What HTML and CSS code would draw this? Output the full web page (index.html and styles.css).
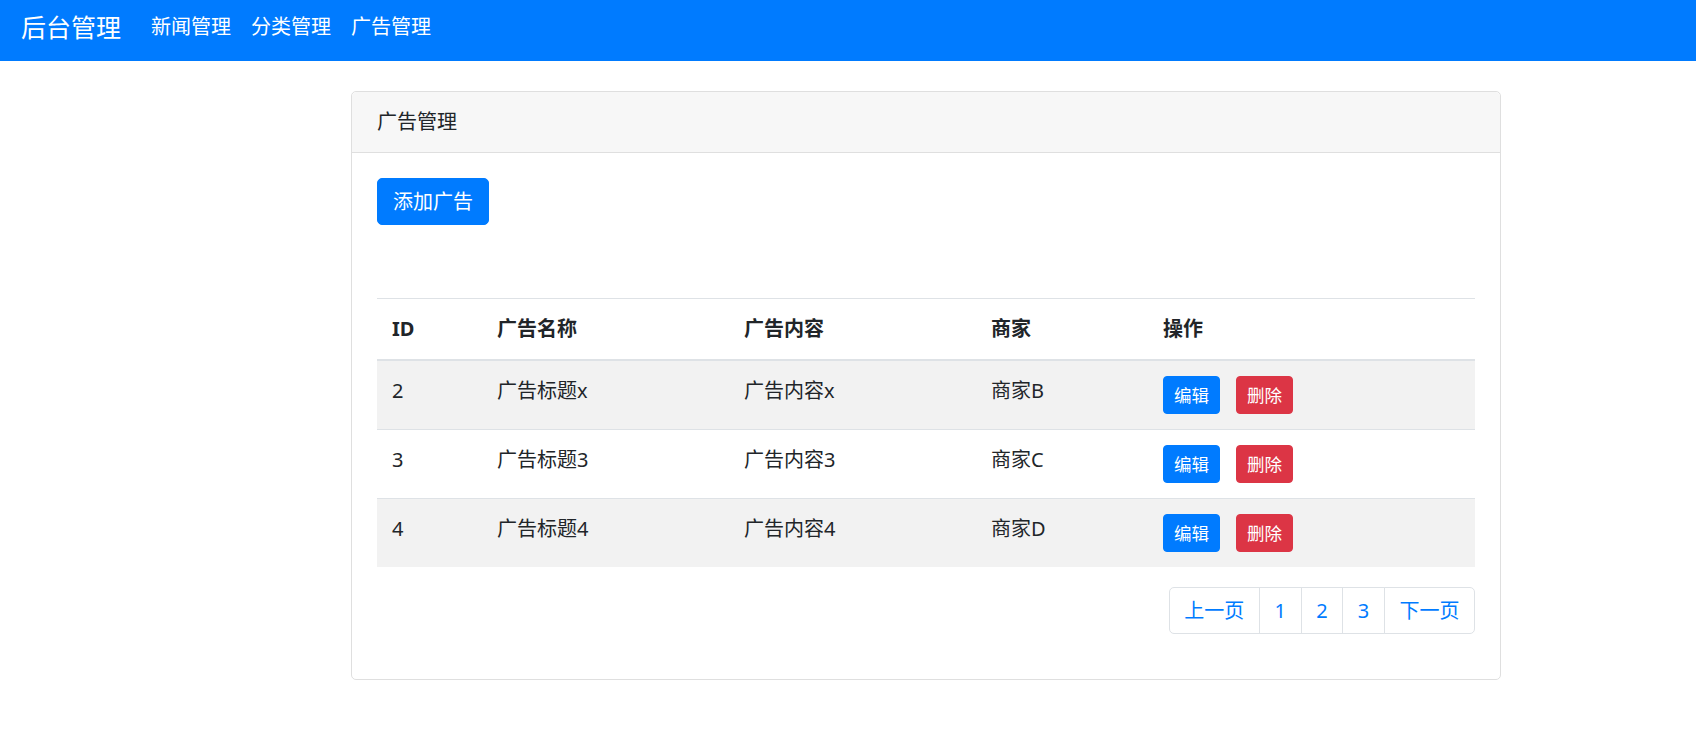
FILE: index.html
```html
<!DOCTYPE html>
<html lang="zh-CN">
<head>
<meta charset="utf-8">
<title>后台管理</title>
<link rel="stylesheet" href="styles.css">
</head>
<body>
<nav class="navbar">
  <a class="brand" href="#">后台管理</a>
  <ul class="nav">
    <li><a class="nav-link" href="#">新闻管理</a></li>
    <li><a class="nav-link" href="#">分类管理</a></li>
    <li><a class="nav-link" href="#">广告管理</a></li>
  </ul>
</nav>
<main class="main">
  <div class="card">
    <div class="card-header">广告管理</div>
    <div class="card-body">
      <a class="btn btn-primary btn-add" href="#">添加广告</a>
      <table class="table">
        <colgroup>
          <col class="c-id"><col class="c-name"><col class="c-content"><col class="c-shop"><col class="c-op">
        </colgroup>
        <thead>
          <tr><th>ID</th><th>广告名称</th><th>广告内容</th><th>商家</th><th>操作</th></tr>
        </thead>
        <tbody>
          <tr class="odd"><td>2</td><td>广告标题x</td><td>广告内容x</td><td>商家B</td><td><a class="btn btn-sm btn-primary" href="#">编辑</a><a class="btn btn-sm btn-danger" href="#">删除</a></td></tr>
          <tr><td>3</td><td>广告标题3</td><td>广告内容3</td><td>商家C</td><td><a class="btn btn-sm btn-primary" href="#">编辑</a><a class="btn btn-sm btn-danger" href="#">删除</a></td></tr>
          <tr class="odd"><td>4</td><td>广告标题4</td><td>广告内容4</td><td>商家D</td><td><a class="btn btn-sm btn-primary" href="#">编辑</a><a class="btn btn-sm btn-danger" href="#">删除</a></td></tr>
        </tbody>
      </table>
      <ul class="pagination">
        <li><a class="page-link first" href="#">上一页</a></li>
        <li><a class="page-link" href="#">1</a></li>
        <li><a class="page-link" href="#">2</a></li>
        <li><a class="page-link" href="#">3</a></li>
        <li><a class="page-link last" href="#">下一页</a></li>
      </ul>
    </div>
  </div>
</main>
</body>
</html>
```

FILE: styles.css
```css
* { box-sizing: border-box; }
html, body { margin: 0; padding: 0; }
body {
  font-family: "Noto Sans", "Noto Sans CJK SC", sans-serif;
  font-size: 20px;
  line-height: 1.5;
  color: #212529;
  background: #fff;
}
a { text-decoration: none; }

.navbar {
  display: flex;
  align-items: center;
  height: 61px;
  padding: 0 20px 7px 21px;
  background: #007bff;
}
.brand {
  color: #fff;
  font-size: 25px;
  line-height: 37px;
  margin-right: 20px;
}
.nav {
  display: flex;
  list-style: none;
  margin: 0;
  padding: 0;
}
.nav-link {
  display: block;
  color: #fff;
  padding: 0 10px;
  font-size: 20px;
  line-height: 30px;
}

.main {
  padding: 30px 0 0 351px;
}
.card {
  width: 1150px;
  border: 1px solid #dfdfdf;
  border-radius: 5px;
  background: #fff;
}
.card-header {
  padding: 15px 25px;
  background: #f7f7f7;
  border-bottom: 1px solid #dfdfdf;
  border-radius: 5px 5px 0 0;
  font-size: 20px;
  line-height: 30px;
}
.card-body {
  padding: 25px;
}

.btn {
  display: inline-block;
  border: 1px solid transparent;
  border-radius: 5px;
  color: #fff;
  vertical-align: middle;
}
.btn-primary { background: #007bff; border-color: #007bff; }
.btn-danger { background: #dc3545; border-color: #dc3545; }
.btn-add {
  padding: 7.5px 15px;
  font-size: 20px;
  line-height: 30px;
  margin-bottom: 73px;
}
.btn-sm {
  padding: 5px 10px;
  font-size: 17.5px;
  line-height: 26px;
  border-radius: 4px;
  margin-right: 16px;
}

.table {
  width: 100%;
  border-collapse: collapse;
  table-layout: fixed;
  margin-bottom: 20px;
}
.c-id { width: 105px; }
.c-name { width: 247px; }
.c-content { width: 247px; }
.c-shop { width: 172px; }
.c-op { width: 327px; }
.table th, .table td {
  padding: 15px;
  text-align: left;
  vertical-align: top;
  border-top: 1px solid #dee2e6;
  line-height: 30px;
}
.table th {
  vertical-align: bottom;
  border-bottom: 2px solid #dee2e6;
  font-weight: 700;
}
.table tbody tr.odd { background: #f2f2f2; }
.table td { height: 68px; }

.pagination {
  display: flex;
  justify-content: flex-end;
  list-style: none;
  margin: 0 0 20px;
  padding: 0;
}
.page-link {
  display: block;
  padding: 10px 14.6px;
  margin-left: -1px;
  line-height: 25px;
  font-size: 20px;
  color: #007bff;
  background: #fff;
  border: 1px solid #dee2e6;
}
.page-link.first { margin-left: 0; border-radius: 5px 0 0 5px; }
.page-link.last { border-radius: 0 5px 5px 0; }
```
